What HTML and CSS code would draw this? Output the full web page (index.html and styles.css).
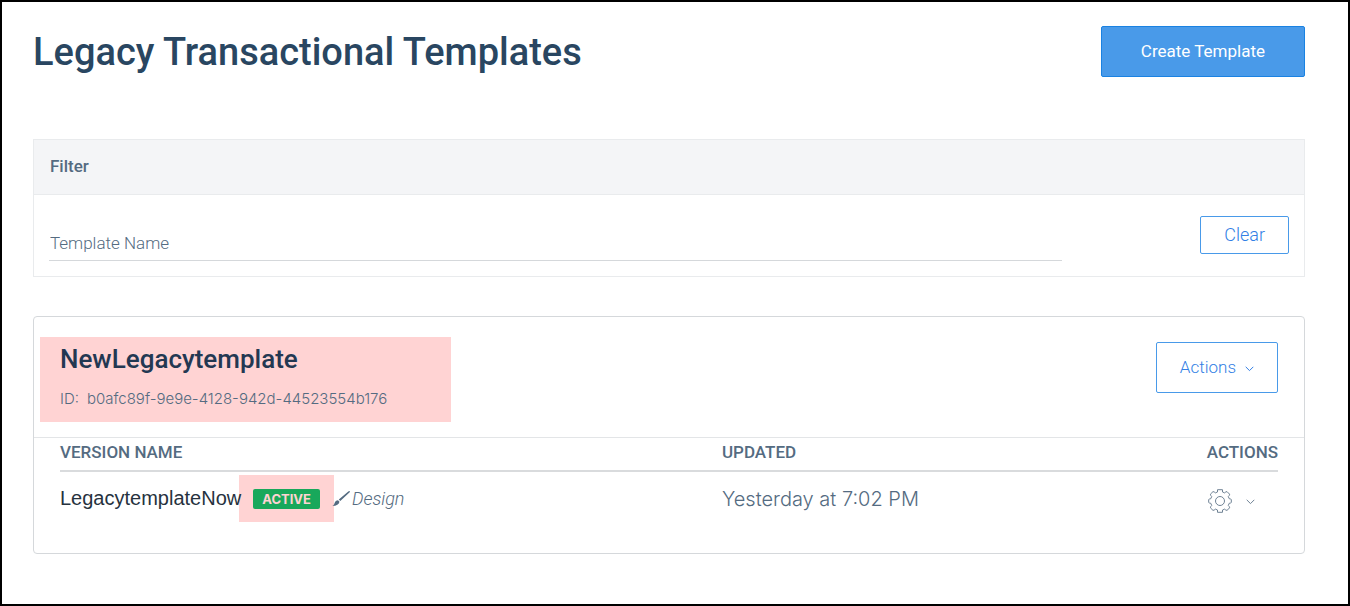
FILE: index.html
```html
<!DOCTYPE html>
<html lang="en">
<head>
  <meta charset="UTF-8">
  <meta name="viewport" content="width=device-width, initial-scale=1.0">
  <title>Legacy Transactional Templates</title>
  <link rel="stylesheet" href="styles.css">
</head>
<body>
  <main class="page">
    <header class="page-header">
      <h1>Legacy Transactional Templates</h1>
      <button type="button" class="btn btn-primary">Create Template</button>
    </header>

    <section class="filter">
      <h2>Filter</h2>
      <form class="filter-body">
        <input type="text" id="templateName" placeholder="Template Name" aria-label="Template Name">
        <button type="reset" class="btn btn-small">Clear</button>
      </form>
    </section>

    <section class="card">
      <div class="card-header">
        <div class="card-title">
          <h2>NewLegacytemplate</h2>
          <p><span>ID:</span><span>b0afc89f-9e9e-4128-942d-44523554b176</span></p>
        </div>
        <button type="button" class="btn btn-actions">
          Actions
          <svg class="chevron" viewBox="0 0 9 6" aria-hidden="true"><path d="M.7.8l3.8 3.800L8.300.8"/></svg>
        </button>
      </div>

      <table class="versions">
        <thead>
          <tr>
            <th class="col-name">Version Name</th>
            <th>Updated</th>
            <th class="col-actions">Actions</th>
          </tr>
        </thead>
        <tbody>
          <tr>
            <td>
              <div class="version">
                <span class="version-name">LegacytemplateNow</span>
                <span class="badge">ACTIVE</span>
                <span class="editor">
                  <svg class="brush" viewBox="0 0 18 16" aria-hidden="true">
                    <path d="M17.700.2c.4.400.1.900-.3 1.300L8.300 9.900 6.800 8.600 16 .8c.6-.5 1.300-.9 1.700-.6z"/>
                    <path d="M6 9.300l1.500 1.400C7.100 13.300 4.600 14.800.3 15c1.500-.7 1.700-1.500 2.200-2.800.6-1.700 1.900-2.900 3.500-2.900z"/>
                  </svg>
                  <em>Design</em>
                </span>
              </div>
            </td>
            <td class="updated">Yesterday at 7:02 PM</td>
            <td class="col-actions">
              <button type="button" class="gear-btn" aria-label="Version actions">
                <svg class="gear" viewBox="0 0 24 24" aria-hidden="true">
                  <path d="M9.500.7h5v2.300l2.200.9c.6-.8 1.500-1.300 2.300-1.300l2.600 2.600c0 .9-.5 1.700-1.300 2.300l.9 2.200c1 .1 1.600.4 2.100.8v3c-.5.500-1.100.7-2.100.8l-.9 2.200c.8.600 1.300 1.400 1.300 2.300L19 21.400c-.8 0-1.700-.5-2.300-1.300l-2.200.9v2.300h-5V21l-2.200-.9c-.6.800-1.500 1.300-2.300 1.300l-2.600-2.600c0-.9.500-1.700 1.300-2.300l-.9-2.200c-1-.1-1.600-.3-2.100-.8v-3c.5-.4 1.100-.7 2.100-.8l.9-2.200c-.8-.6-1.300-1.400-1.300-2.300L5 2.600c.8 0 1.700.5 2.300 1.300L9.500 3z"/>
                  <circle cx="12" cy="12" r="4.500"/>
                </svg>
                <svg class="chevron" viewBox="0 0 9 6" aria-hidden="true"><path d="M.7.8l3.800 3.800L8.300.8"/></svg>
              </button>
            </td>
          </tr>
        </tbody>
      </table>
    </section>
  </main>
</body>
</html>
```
FILE: styles.css
```css
* {
  box-sizing: border-box;
}

body {
  margin: 0;
  font-family: Roboto, "Liberation Sans", sans-serif;
  font-size: 17px;
  font-weight: 300;
  color: #546b81;
  background-color: #fff;
}

h1, h2, p {
  margin: 0;
}

.page {
  min-height: 100vh;
  padding: 24px 43px 24px 31px;
  border: 2px solid #000;
}

.page-header {
  display: flex;
  justify-content: space-between;
  align-items: center;
  margin-bottom: 62px;
}

h1 {
  font-size: 38px;
  font-weight: 500;
  color: #294661;
}

.btn {
  height: 51px;
  padding: 0 23px 2px;
  font: inherit;
  color: #337fe5;
  background-color: #fff;
  border: 1px solid #499ae9;
  border-radius: 2px;
  cursor: pointer;
}

.btn-primary {
  padding: 0 39px 2px;
  font-weight: 400;
  color: #fff;
  background-color: #499ae9;
  border-color: #1a82e2;
}

.btn-small {
  height: 38px;
  margin-left: 138px;
  font-size: 18px;
}

/* filter */
.filter {
  margin-bottom: 39px;
  border: 1px solid #e9ebed;
}

.filter h2 {
  padding: 15px 16px 17px;
  font-size: 17px;
  line-height: 22px;
  font-weight: 500;
  background-color: #f4f5f7;
  border-bottom: 1px solid #e9ebed;
}

.filter-body {
  display: flex;
  align-items: flex-start;
  padding: 21px 15px 15px;
}

.filter-body input {
  flex: 1;
  height: 45px;
  padding: 10px 0 0 1px;
  font: inherit;
  color: inherit;
  background: none;
  border: 0;
  border-bottom: 1px solid #d5d8db;
  outline: none;
}

.filter-body input::placeholder {
  color: #546b81;
  opacity: 1;
}

/* template card */
.card {
  border: 1px solid #d5d8db;
  border-radius: 4px;
}

.card-header {
  display: flex;
  justify-content: space-between;
  align-items: flex-start;
  padding: 20px 26px 15px 6px;
  border-bottom: 1px solid #e3e5e7;
}

.card-title {
  width: 411px;
  padding: 6px 20px 13px;
  background-color: #ffd3d3;
}

.card-title h2 {
  margin-bottom: 14px;
  font-size: 26px;
  line-height: 32px;
  font-weight: 500;
  color: #233852;
}

.card-title p {
  display: flex;
  gap: 8px;
  font-family: Inter, sans-serif;
  font-size: 15px;
  line-height: 20px;
}

.btn-actions {
  display: flex;
  align-items: center;
  gap: 9px;
  margin-top: 5px;
}

.chevron {
  width: 9px;
  height: 6px;
  fill: none;
  stroke: currentColor;
}

.btn-actions .chevron {
  margin-top: 5px;
}

.versions {
  width: calc(100% - 52px);
  margin: 0 26px 32px;
  border-collapse: collapse;
  table-layout: fixed;
}

.versions th {
  height: 33px;
  padding: 0 0 4px;
  font-weight: 500;
  text-align: left;
  text-transform: uppercase;
  border-bottom: 2px solid #d9dbdd;
}

.versions td {
  height: 50px;
  padding: 4px 0 0;
}

.versions .col-name {
  width: 54.35%;
}

.versions .col-actions {
  text-align: right;
}

.version {
  display: flex;
  align-items: center;
  gap: 12px;
  isolation: isolate;
}

.version-name {
  font-family: "Liberation Sans", Arial, sans-serif;
  font-size: 20px;
  font-weight: 400;
  color: #26323e;
}

.badge {
  position: relative;
  padding: 0 9px;
  font-family: Inter, sans-serif;
  font-size: 13px;
  line-height: 20px;
  font-weight: 700;
  color: #ffd3d3;
  background-color: #18a85b;
  border-radius: 2px;
}

/* highlight around the badge */
.badge::after {
  content: "";
  position: absolute;
  inset: -14px -14px -13px;
  z-index: -1;
  background-color: #ffd3d3;
}

.editor {
  display: flex;
  align-items: center;
  gap: 2px;
  font-size: 18px;
}

.brush {
  width: 18px;
  height: 16px;
  fill: #546b81;
}

.versions .updated {
  font-family: Inter, sans-serif;
  font-size: 20px;
}

.gear-btn {
  display: inline-flex;
  align-items: center;
  gap: 14px;
  padding: 9px 23px 0 0;
  color: #6f8294;
  background: none;
  border: 0;
  cursor: pointer;
}

.gear {
  width: 24px;
  height: 24px;
  fill: none;
  stroke: currentColor;
  stroke-linejoin: round;
}

.gear-btn .chevron {
  margin-top: 2px;
}
```
